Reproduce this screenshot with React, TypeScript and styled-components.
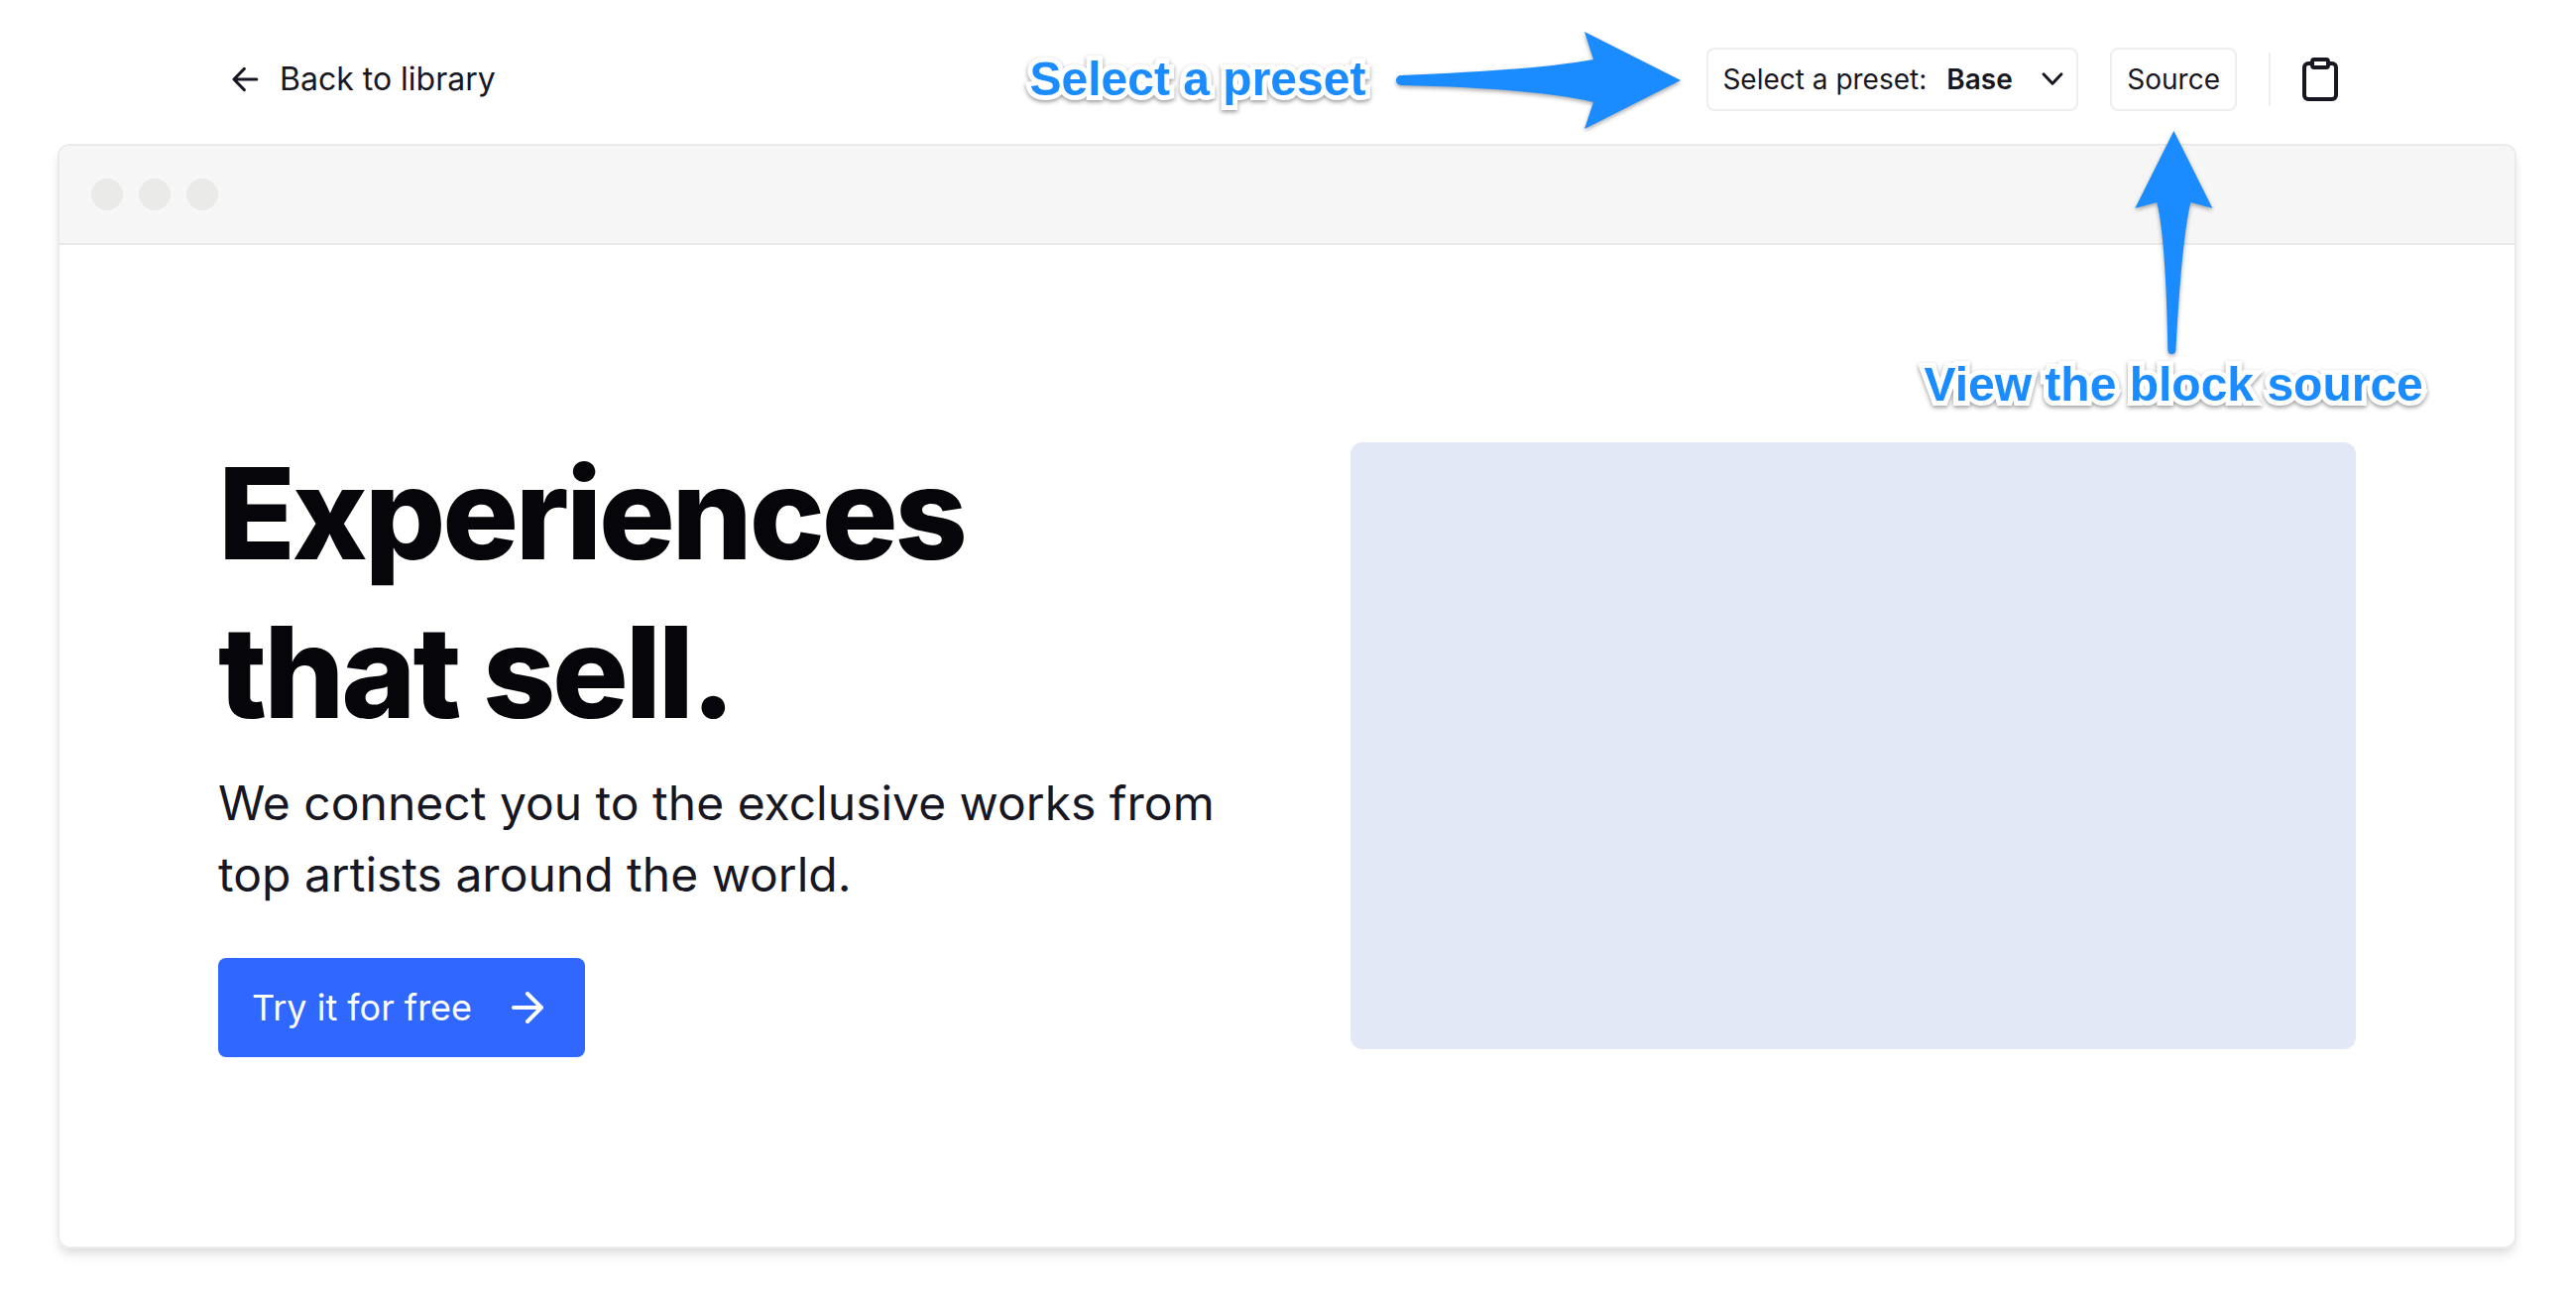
import React from "react";
import styled, { createGlobalStyle } from "styled-components";

const GlobalStyle = createGlobalStyle`
  *, *::before, *::after { box-sizing: border-box; }
  body {
    margin: 0;
    background: #ffffff;
    color: #171723;
    font-family: Inter, "Liberation Sans", sans-serif;
  }
  button, select { font: inherit; color: inherit; }
`;

const Page = styled.div`
  padding: 0 60px 64px 58px;
`;

const TopBar = styled.header`
  display: flex;
  align-items: center;
  justify-content: space-between;
  height: 145px;
  padding: 15px 174px 0 170px;
`;

const BackLink = styled.a`
  display: flex;
  align-items: center;
  gap: 14px;
  color: inherit;
  font-size: 32px;
  line-height: 48px;
  text-decoration: none;
`;

const Icon = styled.svg<{ $size: number; $weight?: number }>`
  display: block;
  flex: none;
  width: ${(p) => p.$size}px;
  height: ${(p) => p.$size}px;
  fill: none;
  stroke: currentColor;
  stroke-width: ${(p) => p.$weight ?? 2};
  stroke-linecap: round;
  stroke-linejoin: round;
`;

const Tools = styled.div`
  display: flex;
  align-items: center;
  gap: 32px;
  font-size: 28px;
  line-height: 40px;
`;

const Anchor = styled.div`
  position: relative;
`;

const PresetField = styled.label`
  display: grid;
  grid-template-columns: auto auto;
  align-items: center;
  column-gap: 20px;
  height: 64px;
  padding: 0 12px 0 14px;
  border: 2px solid #efefef;
  border-radius: 8px;
`;

const SelectBox = styled.span`
  display: grid;
  align-items: center;
  justify-items: end;

  > * { grid-area: 1 / 1; }
  > svg { pointer-events: none; }
`;

const Select = styled.select`
  appearance: none;
  margin: 0;
  padding: 0 52px 0 0;
  border: 0;
  background: transparent;
  font-weight: 600;
  line-height: 40px;
`;

const SourceButton = styled.button`
  display: block;
  height: 64px;
  padding: 0 15px;
  border: 2px solid #efefef;
  border-radius: 8px;
  background: #ffffff;
`;

const Divider = styled.span`
  width: 2px;
  height: 54px;
  margin-right: -6px;
  background: #efefef;
`;

const IconButton = styled.button`
  padding: 0;
  border: 0;
  background: transparent;
`;

const Callout = styled.div`
  position: absolute;
  z-index: 1;
  display: flex;
  align-items: center;
  color: #1a8cff;
  pointer-events: none;
`;

const SideCallout = styled(Callout)`
  top: 50%;
  right: calc(100% + 26px);
  gap: 32px;
  transform: translateY(-50%);
`;

const BelowCallout = styled(Callout)`
  top: calc(100% + 20px);
  left: 50%;
  flex-direction: column;
  gap: 2px;
  transform: translateX(-50%);
`;

const CalloutText = styled.span`
  font-family: "Liberation Sans", Arial, sans-serif;
  font-size: 48px;
  font-weight: 700;
  line-height: 56px;
  white-space: nowrap;
  paint-order: stroke fill;
  -webkit-text-stroke: 10px #ffffff;
  stroke-linejoin: round;
  filter: drop-shadow(0 2px 2px rgba(0, 0, 0, 0.4));
`;

const Arrow = styled.svg`
  display: block;
  flex: none;
  fill: currentColor;
  overflow: visible;
  filter: drop-shadow(0 2px 2px rgba(0, 0, 0, 0.35));
`;

const Preview = styled.main`
  overflow: hidden;
  border: 2px solid #ebebeb;
  border-radius: 12px;
  box-shadow: 0 8px 12px -2px rgba(0, 0, 0, 0.1), 0 4px 8px -2px rgba(0, 0, 0, 0.06);
`;

const WindowBar = styled.div`
  display: flex;
  align-items: center;
  gap: 16px;
  height: 100px;
  padding: 0 32px;
  border-bottom: 2px solid #e9e9e9;
  background: #f6f6f6;
`;

const Dot = styled.span`
  width: 32px;
  height: 32px;
  border-radius: 50%;
  background: #eaeae9;
`;

const Hero = styled.section`
  display: grid;
  grid-template-columns: 1fr 1fr;
  align-items: center;
  column-gap: 128px;
  padding: 191px 160px;
`;

const Copy = styled.div`
  display: flex;
  flex-direction: column;
  align-items: flex-start;
`;

const Title = styled.h1`
  margin: 0 0 16px;
  color: #06060a;
  font-size: 128px;
  font-weight: 800;
  line-height: 160px;
  letter-spacing: -0.025em;
`;

const Lead = styled.p`
  margin: 0 0 48px;
  font-size: 48px;
  line-height: 72px;
`;

const CallToAction = styled.button`
  display: flex;
  align-items: center;
  gap: 32px;
  height: 100px;
  padding: 0 34px;
  border: 0;
  border-radius: 8px;
  background: #2f67ff;
  color: #ffffff;
  font-size: 36px;
  line-height: 48px;
`;

const Picture = styled.div`
  aspect-ratio: 1014 / 612;
  border-radius: 12px;
  background: #e2e8f6;
`;

export default function App() {
  return (
    <>
      <GlobalStyle />
      <Page>
        <TopBar>
          <BackLink href="#library">
            <Icon $size={40} $weight={1.8} viewBox="0 0 24 24" aria-hidden="true">
              <path d="M18.500 12H4.800M11 5.600 4.800 12l6.200 6.400" />
            </Icon>
            Back to library
          </BackLink>
          <Tools>
            <Anchor>
              <PresetField>
                Select a preset:
                <SelectBox>
                  <Select defaultValue="Base">
                    <option>Base</option>
                  </Select>
                  <Icon $size={24} viewBox="0 0 16 16" aria-hidden="true">
                    <path d="M2 4.500 8 10.800l6-6.300" />
                  </Icon>
                </SelectBox>
              </PresetField>
              <SideCallout>
                <CalloutText>Select a preset</CalloutText>
                <Arrow width="286" height="98" viewBox="0 0 286 98" aria-hidden="true">
                  <path d="M4 45Q138 40 198 29L189 1 286 50 189 99 198 72Q138 58 4 55A5 5 0 0 1 4 45Z" />
                </Arrow>
              </SideCallout>
            </Anchor>
            <Anchor>
              <SourceButton type="button">Source</SourceButton>
              <BelowCallout>
                <Arrow width="78" height="226" viewBox="0 0 78 226" aria-hidden="true">
                  <path d="M39 0 78 78 56 72Q47 110 41 221A4 4 0 0 1 33 221Q31 110 22 72L0 78Z" />
                </Arrow>
                <CalloutText>View the block source</CalloutText>
              </BelowCallout>
            </Anchor>
            <Divider />
            <IconButton type="button" aria-label="Copy to clipboard">
              <Icon $size={48} viewBox="0 0 24 24" aria-hidden="true">
                <path d="M16 4h2a2 2 0 0 1 2 2v14a2 2 0 0 1-2 2H6a2 2 0 0 1-2-2V6a2 2 0 0 1 2-2h2" />
                <rect x="8" y="2" width="8" height="4" rx="1" />
              </Icon>
            </IconButton>
          </Tools>
        </TopBar>
        <Preview>
          <WindowBar>
            <Dot />
            <Dot />
            <Dot />
          </WindowBar>
          <Hero>
            <Copy>
              <Title>
                Experiences
                <br />
                that sell.
              </Title>
              <Lead>We connect you to the exclusive works from top artists around the world.</Lead>
              <CallToAction type="button">
                Try it for free
                <Icon $size={48} viewBox="0 0 24 24" aria-hidden="true">
                  <path d="M5 12h14M12 5l7 7-7 7" />
                </Icon>
              </CallToAction>
            </Copy>
            <Picture />
          </Hero>
        </Preview>
      </Page>
    </>
  );
}
